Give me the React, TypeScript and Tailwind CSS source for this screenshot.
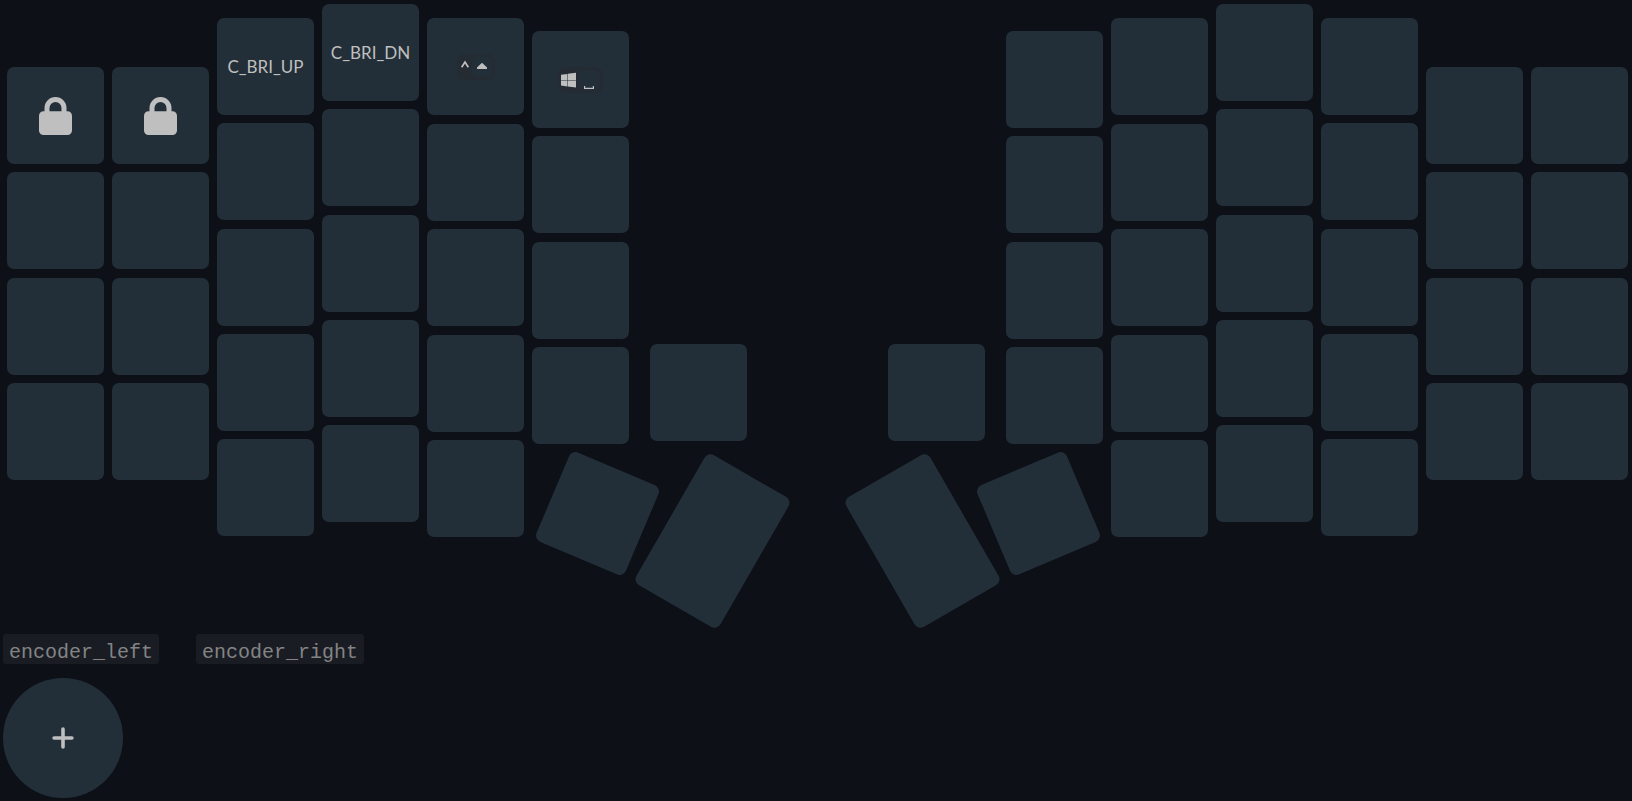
import type { ReactNode } from "react";

const KEY = "flex shrink-0 cursor-pointer items-center justify-center rounded-[7px] bg-[#232f38] text-[#bfbfbf]";

function Key({ label, children }: { label: string; children?: ReactNode }) {
  return (
    <button type="button" aria-label={label} className={`${KEY} size-[97px]`}>
      {children}
    </button>
  );
}

function Lock() {
  return (
    <svg viewBox="0 0 33 38" className="h-[38px] w-[33px]" fill="currentColor" aria-hidden="true">
      <path
        fillRule="evenodd"
        d="M5.500 14.300V11a11 11 0 0 1 22 0v3.300H28.500A4.500 4.500 0 0 1 33 18.800V33.500A4.500 4.500 0 0 1 28.500 38H4.500A4.500 4.500 0 0 1 0 33.500V18.800A4.500 4.500 0 0 1 4.500 14.300ZM10.500 14.300h12V11a6 6 0 0 0-12 0Z"
      />
    </svg>
  );
}

function Combo({ modifier, children }: { modifier: ReactNode; children: ReactNode }) {
  return (
    <span className="flex items-center rounded-[8px] bg-[#242b32] p-[3px]">
      {modifier}
      <span className="flex h-5 items-center justify-center rounded-[6px] bg-[#232f38] px-[5px]">{children}</span>
    </span>
  );
}

function ShiftCombo() {
  return (
    <Combo
      modifier={
        <svg viewBox="0 0 12 20" className="h-5 w-3" fill="none" stroke="currentColor" strokeWidth="1.700" aria-hidden="true">
          <path d="M1.700 10.300 5 5l3.300 5.300" />
        </svg>
      }
    >
      <svg viewBox="0 0 10 20" className="h-5 w-[10px]" fill="currentColor" aria-hidden="true">
        <path d="M5 5.700 10 10.500V12H0V10.500Z" />
      </svg>
    </Combo>
  );
}

function SpaceCombo() {
  return (
    <Combo
      modifier={
        <svg viewBox="0 0 17 20" className="h-5 w-[17px]" fill="currentColor" aria-hidden="true">
          <path d="M0 4.800 6.300 3.900v6.100H0ZM6.800 3.800 15 2.700v7.300H6.800ZM0 10.500h6.300v5.900L0 15.600ZM6.800 10.500H15V17.500l-8.200-1.100Z" />
        </svg>
      }
    >
      <svg viewBox="0 0 12 20" className="h-5 w-3" fill="none" stroke="currentColor" strokeWidth="1.200" aria-hidden="true">
        <path d="M1.600 16v2.400h8.800V16" />
      </svg>
    </Combo>
  );
}

const text = (value: string) => <span className="font-[Lato,sans-serif] text-[17px] leading-5">{value}</span>;

type Column = { name: string; offset: string; rows: number; top?: ReactNode };

const OUTER = "mt-[67px] h-[413px]";
const RING = "mt-[18px] h-[518px]";
const MIDDLE = "mt-1 h-[518px]";
const INDEX = "mt-[18px] h-[519px]";
const INNER = "mt-[31px] h-[413px]";

const leftColumns: Column[] = [
  { name: "L1", offset: OUTER, rows: 4, top: <Lock /> },
  { name: "L2", offset: OUTER, rows: 4, top: <Lock /> },
  { name: "L3", offset: RING, rows: 5, top: text("C_BRI_UP") },
  { name: "L4", offset: MIDDLE, rows: 5, top: text("C_BRI_DN") },
  { name: "L5", offset: INDEX, rows: 5, top: <ShiftCombo /> },
  { name: "L6", offset: INNER, rows: 4, top: <SpaceCombo /> },
];

const rightColumns: Column[] = [
  { name: "R6", offset: INNER, rows: 4 },
  { name: "R5", offset: INDEX, rows: 5 },
  { name: "R4", offset: MIDDLE, rows: 5 },
  { name: "R3", offset: RING, rows: 5 },
  { name: "R2", offset: OUTER, rows: 4 },
  { name: "R1", offset: OUTER, rows: 4 },
];

function Columns({ columns }: { columns: Column[] }) {
  return (
    <div className="flex gap-2">
      {columns.map((column) => (
        <div key={column.name} className={`flex flex-col justify-between ${column.offset}`}>
          {Array.from({ length: column.rows }, (_, row) => (
            <Key key={row} label={`${column.name} row ${row + 1}`}>
              {row === 0 ? column.top : null}
            </Key>
          ))}
        </div>
      ))}
    </div>
  );
}

function PlusKnob() {
  return (
    <button
      type="button"
      aria-label="Add encoder binding"
      className="flex size-[120px] cursor-pointer items-center justify-center rounded-full bg-[#232f38] text-[#bfbfbf]"
    >
      <svg viewBox="0 0 22 22" className="size-[22px]" fill="none" stroke="currentColor" strokeWidth="3.600" strokeLinecap="round" aria-hidden="true">
        <path d="M11 2.100v17.800M2.100 11h17.800" />
      </svg>
    </button>
  );
}

const TAG = "rounded-[3px] bg-[#191c23] px-[6px] pt-[7px] font-['Liberation_Mono',monospace] text-[20px] leading-[23px] text-[#838485]";

export default function App() {
  return (
    <main className="min-h-screen bg-[#0d1017]">
      <section aria-label="Keymap" className="flex justify-between pr-1 pl-[7px]">
        <div className="relative flex items-start gap-[21px]">
          <Columns columns={leftColumns} />
          <div className="mt-[344px]">
            <Key label="Left thumb upper" />
          </div>
          <button type="button" aria-label="Left thumb inner" className={`${KEY} absolute top-[465px] left-[542px] size-[97px] rotate-[23deg]`} />
          <button type="button" aria-label="Left thumb outer" className={`${KEY} absolute top-[466px] left-[657px] h-[150px] w-[97px] rotate-[30deg]`} />
        </div>
        <div className="relative flex items-start gap-[21px]">
          <div className="mt-[344px]">
            <Key label="Right thumb upper" />
          </div>
          <Columns columns={rightColumns} />
          <button type="button" aria-label="Right thumb inner" className={`${KEY} absolute top-[465px] right-[541px] size-[97px] -rotate-[23deg]`} />
          <button type="button" aria-label="Right thumb outer" className={`${KEY} absolute top-[466px] right-[657px] h-[150px] w-[97px] -rotate-[30deg]`} />
        </div>
      </section>
      <section aria-label="Encoders" className="mt-[97px] flex items-start gap-[37px] px-[3px] pb-[3px]">
        <div className="flex flex-col items-start gap-[14px]">
          <code className={TAG}>encoder_left</code>
          <PlusKnob />
        </div>
        <code className={TAG}>encoder_right</code>
      </section>
    </main>
  );
}
